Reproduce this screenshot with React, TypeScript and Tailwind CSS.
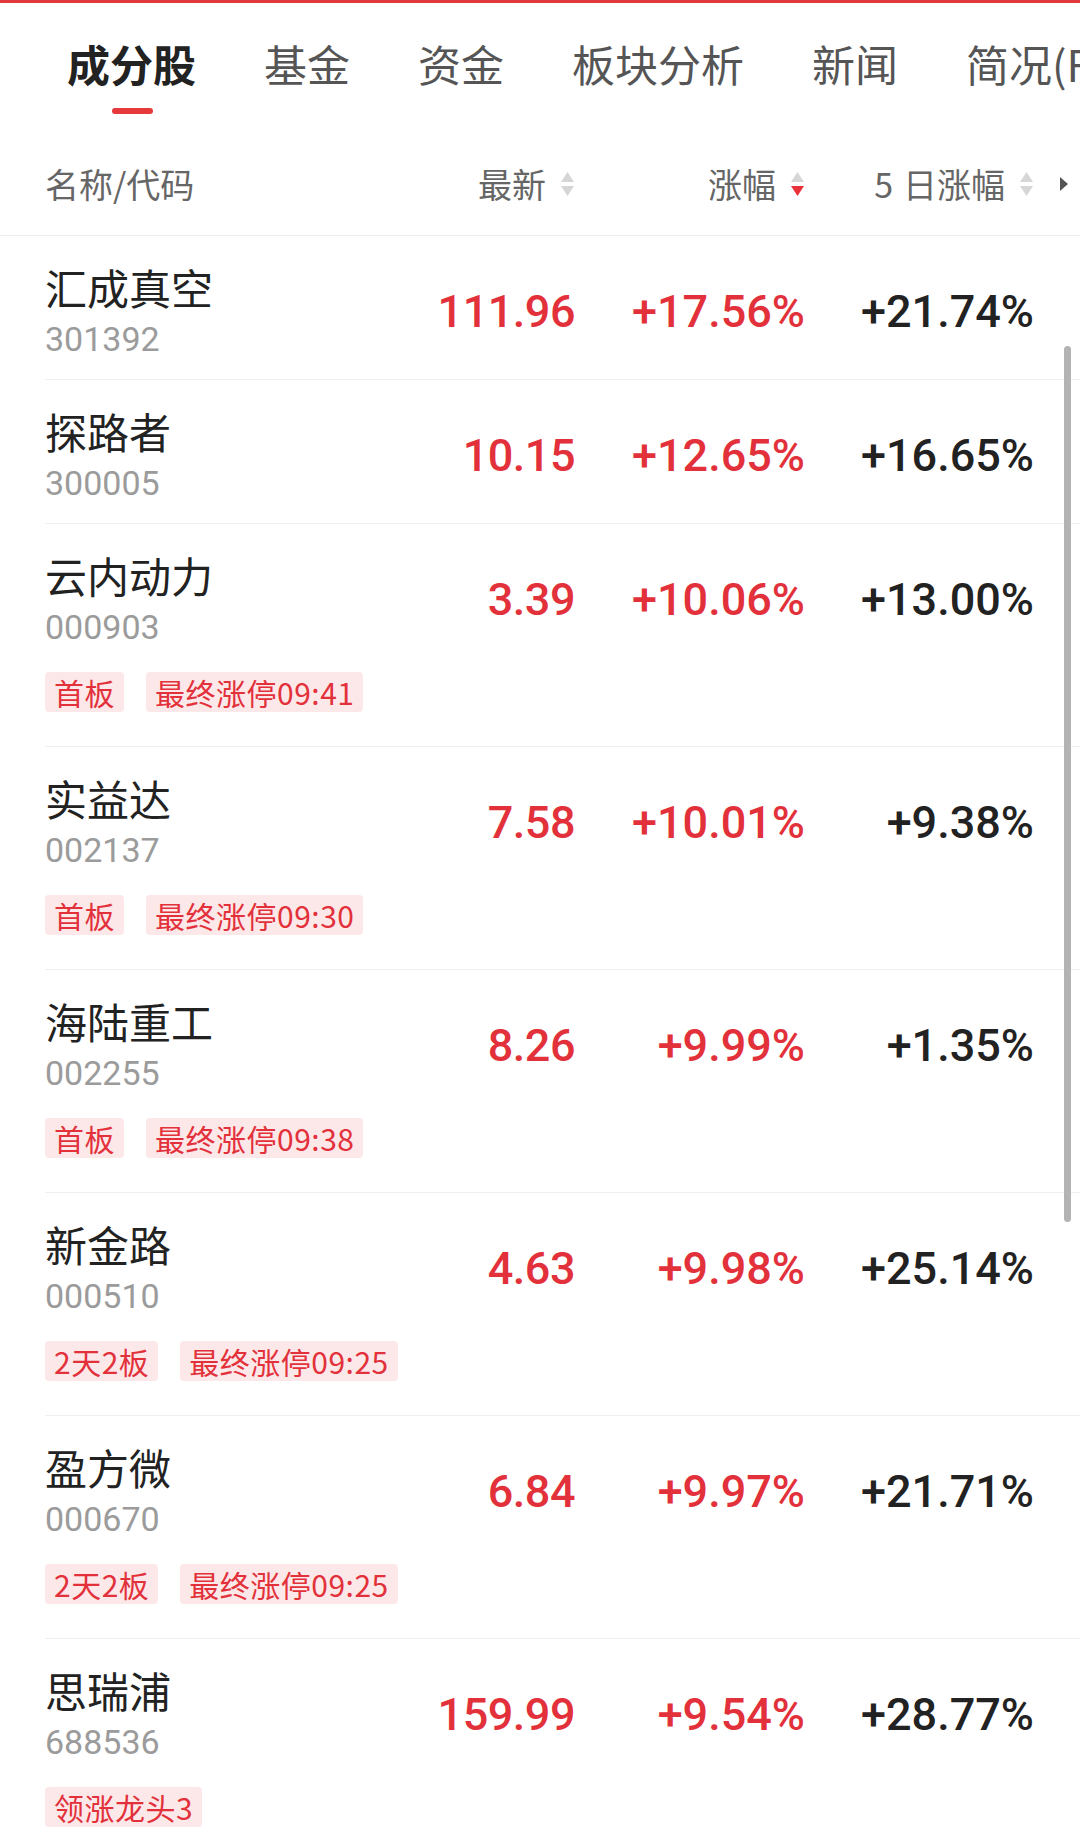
import React from 'react';

type Stock = {
  name: string;
  code: string;
  price: string;
  change: string;
  change5: string;
  tags?: string[];
};

const stocks: Stock[] = [
  { name: '汇成真空', code: '301392', price: '111.96', change: '+17.56%', change5: '+21.74%' },
  { name: '探路者', code: '300005', price: '10.15', change: '+12.65%', change5: '+16.65%' },
  { name: '云内动力', code: '000903', price: '3.39', change: '+10.06%', change5: '+13.00%', tags: ['首板', '最终涨停09:41'] },
  { name: '实益达', code: '002137', price: '7.58', change: '+10.01%', change5: '+9.38%', tags: ['首板', '最终涨停09:30'] },
  { name: '海陆重工', code: '002255', price: '8.26', change: '+9.99%', change5: '+1.35%', tags: ['首板', '最终涨停09:38'] },
  { name: '新金路', code: '000510', price: '4.63', change: '+9.98%', change5: '+25.14%', tags: ['2天2板', '最终涨停09:25'] },
  { name: '盈方微', code: '000670', price: '6.84', change: '+9.97%', change5: '+21.71%', tags: ['2天2板', '最终涨停09:25'] },
  { name: '思瑞浦', code: '688536', price: '159.99', change: '+9.54%', change5: '+28.77%', tags: ['领涨龙头3'] },
];

const tabs = ['成分股', '基金', '资金', '板块分析', '新闻', '简况(F10)'];

const cjk = "font-['Noto_Sans_CJK_SC','Noto_Sans',sans-serif]";
const num = "font-['Roboto','Noto_Sans_CJK_SC',sans-serif]";
const cell = `${num} mt-[23px] self-start text-right text-[45px] font-medium leading-[56px]`;

function SortArrows({ active }: { active?: boolean }) {
  return (
    <svg width="15" height="26" viewBox="0 0 15 26" className="shrink-0">
      <path d="M7.5 1 L14 11 L1 11 Z" fill="#d6d6d6" />
      <path d="M1 15 L14 15 L7.5 25 Z" fill={active ? '#e8313a' : '#d6d6d6'} />
    </svg>
  );
}

function HeaderCell({ label, active }: { label: React.ReactNode; active?: boolean }) {
  return (
    <div className="flex items-center justify-end gap-[14px]">
      <span>{label}</span>
      <SortArrows active={active} />
    </div>
  );
}

function StockRow({ stock }: { stock: Stock }) {
  return (
    <div className={`ml-[45px] border-b border-[#efefef] pt-[25px] pr-[46px] ${stock.tags ? 'pb-[34px]' : 'pb-[14px]'}`}>
      <div className="grid h-[104px] grid-cols-[1fr_230px_230px_229px]">
        <div className="flex flex-col">
          <span className={`${cjk} text-[42px] leading-[52px] text-[#222]`}>{stock.name}</span>
          <span className={`${num} text-[34px] leading-[52px] text-[#9b9b9b]`}>{stock.code}</span>
        </div>
        <span className={`${cell} tracking-[-0.5px] text-[#e2313b]`}>{stock.price}</span>
        <span className={`${cell} text-[#e2313b]`}>{stock.change}</span>
        <span className={`${cell} text-[#222]`}>{stock.change5}</span>
      </div>
      {stock.tags && (
        <div className="mt-[19px] flex gap-[22px]">
          {stock.tags.map((t) => (
            <span
              key={t}
              className={`${cjk} flex h-[40px] items-center rounded-[4px] bg-[#fde8e9] px-[9px] text-[30px] tracking-[0.5px] text-[#e2313b]`}
            >
              {t}
            </span>
          ))}
        </div>
      )}
    </div>
  );
}

export default function App() {
  return (
    <div className="relative h-[1848px] w-[1080px] overflow-hidden bg-white">
      <div className="h-[3px] bg-[#e0393e]" />

      <div className="pt-[31px]">
        <div className={`${cjk} flex gap-[68px] whitespace-nowrap pl-[67px] text-[43px] leading-[58px]`}>
          {tabs.map((t, i) => (
            <span key={t} className={i === 0 ? 'font-bold text-[#222]' : 'text-[#555]'}>
              {t}
            </span>
          ))}
        </div>
        <div className="ml-[112px] mt-[16px] h-[6px] w-[41px] rounded-full bg-[#e5393b]" />
      </div>

      <div className={`${cjk} relative mt-[18px] grid h-[104px] grid-cols-[1fr_230px_230px_229px] items-center border-b border-[#ececec] pl-[45px] pr-[46px] text-[34px] text-[#666]`}>
        <span>名称/代码</span>
        <HeaderCell label="最新" />
        <HeaderCell label="涨幅" active />
        <HeaderCell label={<><span className="mr-[10px]">5</span>日涨幅</>} />
        <svg width="8" height="14" viewBox="0 0 8 14" className="absolute right-[12px] top-[45px]">
          <path d="M0 0 L8 7 L0 14 Z" fill="#555" />
        </svg>
      </div>

      {stocks.map((s) => (
        <StockRow key={s.code} stock={s} />
      ))}

      <div className="absolute left-[1064px] top-[346px] h-[876px] w-[7px] rounded-full bg-[#b3b3b3]" />
    </div>
  );
}
